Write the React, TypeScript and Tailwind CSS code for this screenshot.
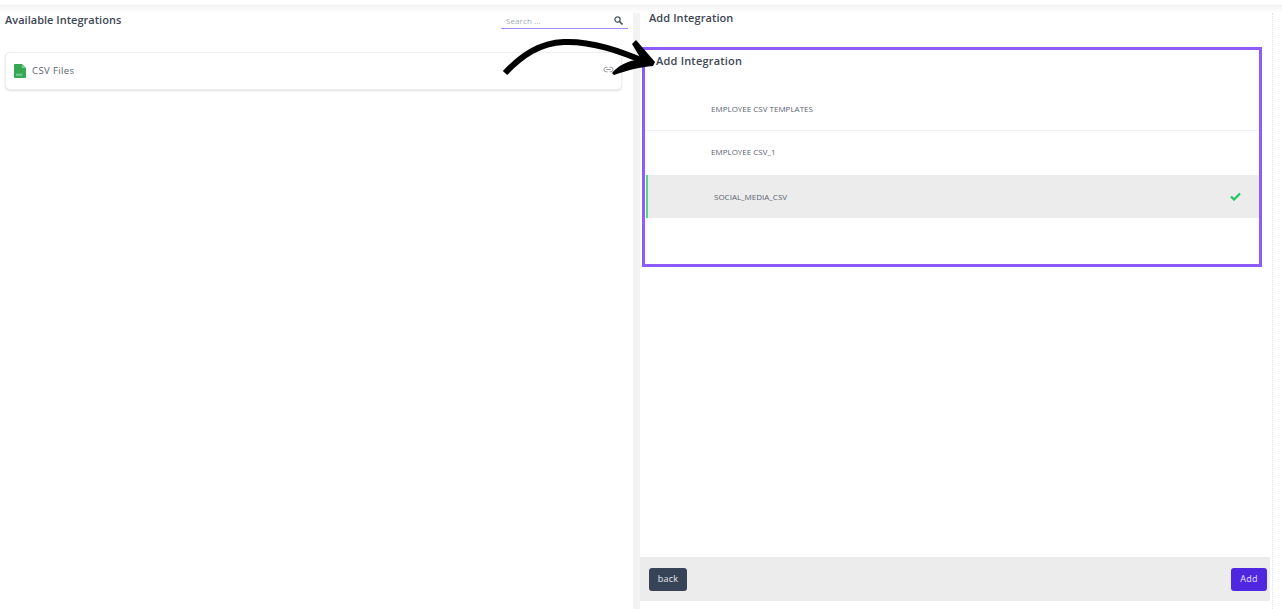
import React from "react";
import { Link2 } from "lucide-react";

const rows = [
  { name: "EMPLOYEE CSV TEMPLATES", selected: false },
  { name: "EMPLOYEE CSV_1", selected: false },
  { name: "SOCIAL_MEDIA_CSV", selected: true },
];

const CsvIcon = () => (
  <svg width="12" height="14" viewBox="0 0 12 14" className="shrink-0">
    <path d="M1 0h7l4 4v9a1 1 0 0 1-1 1H1a1 1 0 0 1-1-1V1a1 1 0 0 1 1-1z" fill="#34a853" />
    <path d="M8 0l4 4H8z" fill="#7fcb95" />
    <rect x="2" y="9.500" width="6.500" height="2.500" fill="#6cc486" />
  </svg>
);

const SearchGlyph = () => (
  <svg width="9" height="9" viewBox="0 0 9 9" fill="none" stroke="#4b5563">
    <circle cx="3.500" cy="3.500" r="2.600" strokeWidth="1.300" />
    <path d="M5.500 5.500L8.500 8.500" strokeWidth="1.700" />
  </svg>
);

const Arrow = () => (
  <svg
    width="162"
    height="50"
    viewBox="0 0 162 50"
    fill="none"
    className="absolute left-[498px] top-[34px] z-10"
  >
    <path
      d="M7 39 C24 21 42 9 66 8 C94 7 122 17 150 29"
      stroke="#000"
      strokeWidth="6"
    />
    <path
      d="M138 6 L157 28 L155 32 C142 33 130 36 116 41 L114 39 C120 32 128 27 143 25 L134 10 Z"
      fill="#000"
    />
  </svg>
);

const App = () => {
  return (
    <div className="relative h-[609px] w-[1282px] overflow-hidden bg-white font-['Open_Sans','Noto_Sans',sans-serif] text-[#3f4754]">
      <div className="h-[5px] bg-white" />
      <div className="h-[8px] bg-gradient-to-b from-[#f2f2f2] to-white" />
      <Arrow />
      <div className="flex h-[596px]">
        <div className="w-[633px] shrink-0 pl-[5px] pr-[11px]">
          <div className="flex h-[16px] items-start justify-between">
            <h2 className="-mt-[1px] text-[11px] font-semibold leading-[16px] tracking-[0.02px] text-[#3e4654]">
              Available Integrations
            </h2>
            <div className="-mr-[6px] flex h-[16px] w-[127px] items-center justify-between border-b border-[#a78bfa] pl-[5px] pr-[5px]">
              <span className="text-[8px] tracking-[0.1px] text-[#a3aab5]">Search ...</span>
              <SearchGlyph />
            </div>
          </div>
          <div className="mt-[23px] flex h-[38px] items-center rounded-[5px] border border-[#eeeff3] bg-white pl-[8px] pr-[7px] shadow-[0_1px_2px_rgba(0,0,0,0.14)]">
            <CsvIcon />
            <span className="ml-[6px] text-[9.500px] tracking-[0.4px] text-[#5b6470]">CSV Files</span>
            <Link2 size={11} className="mb-[3px] ml-auto text-[#8d949e]" />
          </div>
        </div>

        <div className="w-[7px] shrink-0 bg-[#f3f3f3]" />

        <div className="flex w-[630px] shrink-0 flex-col">
          <h2 className="-mt-[3px] pl-[9px] text-[11px] font-semibold leading-[16px] tracking-[0.08px] text-[#3e4654]">
            Add Integration
          </h2>
          <div className="ml-[2px] mt-[21px] h-[220px] w-[620px] border-[3px] border-[#8c5cff] bg-white">
            <h3 className="pl-[11px] pt-[3px] text-[11px] font-semibold leading-[16px] tracking-[0.2px] text-[#3e4654]">
              Add Integration
            </h3>
            <div className="mt-[18px]">
              {rows.map((row, i) => (
                <div
                  key={row.name}
                  className={
                    row.selected
                      ? "ml-[1px] mt-[1px] flex h-[43px] items-center border-l-2 border-[#4ade80] bg-[#ececec] pl-[66px] pr-[18px]"
                      : i === 0
                        ? "flex h-[44px] items-center border-b border-[#eef1f5] pl-[66px]"
                        : "flex h-[43px] items-center pb-[1px] pl-[66px]"
                  }
                >
                  <span className="text-[8px] text-[#5b6470]">{row.name}</span>
                  {row.selected && (
                    <svg width="11" height="9" viewBox="0 0 11 9" fill="none" className="ml-auto">
                      <path d="M1 4.500L4 7.500L10 1.500" stroke="#22c55e" strokeWidth="2.200" />
                    </svg>
                  )}
                </div>
              ))}
            </div>
          </div>
          <div className="mt-[290px] flex h-[44px] items-center justify-between bg-[#ececec] pl-[9px] pr-[3px]">
            <button className="h-[23px] w-[38px] rounded-[3px] bg-[#374357] text-[9px] tracking-[0.3px] text-[#e5e7eb]">
              back
            </button>
            <button className="h-[23px] w-[36px] rounded-[3px] bg-[#4f27e0] text-[9px] tracking-[0.3px] text-[#e5e2fb]">
              Add
            </button>
          </div>
        </div>

        <div className="ml-[2px] h-full border-l border-dotted border-[#e3e3e3]" />
      </div>
    </div>
  );
};

export default App;
